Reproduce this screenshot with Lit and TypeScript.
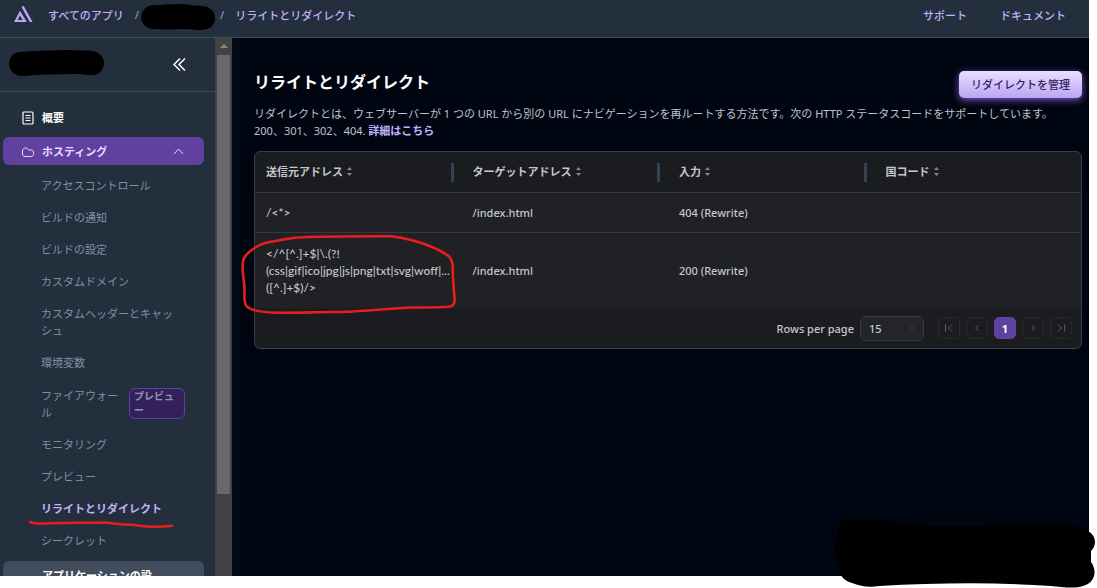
import { LitElement, html, css, svg, nothing } from "lit";
import { customElement } from "lit/decorators.js";
import { classMap } from "lit/directives/class-map.js";

interface NavItem {
  label: string;
  badge?: string;
  active?: boolean;
}

const NAV: NavItem[] = [
  { label: "アクセスコントロール" },
  { label: "ビルドの通知" },
  { label: "ビルドの設定" },
  { label: "カスタムドメイン" },
  { label: "カスタムヘッダーとキャッシュ" },
  { label: "環境変数" },
  { label: "ファイアウォール", badge: "プレビュー" },
  { label: "モニタリング" },
  { label: "プレビュー" },
  { label: "リライトとリダイレクト", active: true },
  { label: "シークレット" },
];

const COLUMNS = ["送信元アドレス", "ターゲットアドレス", "入力", "国コード"];

const ROWS = [
  { source: ["/<*>"], target: "/index.html", type: "404 (Rewrite)", country: "" },
  {
    source: ["</^[^.]+$|\\.(?!", "(css|gif|ico|jpg|js|png|txt|svg|woff|...", "([^.]+$)/>"],
    target: "/index.html",
    type: "200 (Rewrite)",
    country: "",
  },
];

@customElement("top-bar")
class TopBar extends LitElement {
  static styles = css`
    :host {
      display: flex;
      justify-content: space-between;
      box-sizing: border-box;
      height: 38px;
      padding: 0 23px 8px 14px;
      border-bottom: 1px solid #414d5c;
      background: #242f3e;
      color: #8d99a8;
      font-size: 11px;
      font-weight: 500;
    }
    .crumbs,
    .links {
      display: flex;
      align-items: center;
    }
    .logo {
      display: block;
      margin-right: 15px;
    }
    a {
      color: #c3b1fb;
      text-decoration: none;
    }
    .slash {
      margin: 0 11px;
    }
    .hidden-name {
      width: 59px;
    }
    .links {
      gap: 33px;
    }
  `;

  render() {
    return html`
      <nav class="crumbs" aria-label="パンくず">
        <svg class="logo" width="19" height="17" viewBox="0 0 19 17" fill="#b9a6f5">
          <path d="M6 4.800 0 16h10.500L9.200 13.900H3.700L6 9.500 9.900 16h2.900Z" />
          <path d="M7.700 1.600 8.700 0h1L18.600 16H15.900Z" />
        </svg>
        <a href="#apps">すべてのアプリ</a>
        <span class="slash">/</span>
        <span class="hidden-name"></span>
        <span class="slash">/</span>
        <a href="#rewrites">リライトとリダイレクト</a>
      </nav>
      <nav class="links" aria-label="ヘルプ">
        <a href="#support">サポート</a>
        <a href="#docs">ドキュメント</a>
      </nav>
    `;
  }
}

@customElement("side-nav")
class SideNav extends LitElement {
  static styles = css`
    :host {
      display: grid;
      grid-template-columns: minmax(0, 1fr) 17px;
      min-height: 0;
      overflow: hidden;
      background: #242f3e;
      font-size: 11px;
      line-height: 17px;
    }
    .panel {
      min-width: 0;
    }
    .head {
      display: flex;
      justify-content: flex-end;
      align-items: center;
      height: 53px;
      padding-right: 28px;
      border-bottom: 1px solid #414d5c;
    }
    button {
      font: inherit;
      border: 0;
      background: none;
      padding: 0;
      cursor: pointer;
    }
    .collapse {
      display: block;
      color: #fff;
    }
    svg {
      display: block;
    }
    .body {
      padding: 11px 11px 0 3px;
    }
    .row {
      display: grid;
      grid-template-columns: 14px 1fr auto;
      align-items: start;
      gap: 7px;
      box-sizing: border-box;
      width: 100%;
      padding: 6px 20px 5px 18px;
      border-radius: 6px;
      color: #fff;
      font-weight: 700;
      text-align: left;
      text-decoration: none;
    }
    .row svg {
      align-self: center;
    }
    .overview {
      margin: 0 0 6px;
    }
    .hosting {
      background: #61419f;
      color: #e6dcff;
    }
    .settings {
      margin-top: 5px;
      background: #414d5c;
    }
    .settings span {
      grid-column: 2;
      max-width: 115px;
    }
    ul {
      list-style: none;
      margin: 4px 0 0;
      padding: 0 19px 0 38px;
    }
    li a {
      display: flex;
      align-items: center;
      gap: 6px;
      padding: 8px 0 7px;
      color: #8290a0;
      text-decoration: none;
    }
    li span {
      flex: 1;
      max-width: 140px;
    }
    li .active {
      color: #c3b1fb;
      font-weight: 700;
    }
    .badge {
      flex: none;
      box-sizing: border-box;
      width: 56px;
      height: 31px;
      margin: 2px 0;
      padding: 0 4px;
      border: 1px solid #61419f;
      border-radius: 6px;
      background: #34215c;
      color: #8d99a8;
      font-style: normal;
      font-weight: 700;
      font-size: 10px;
      line-height: 14px;
    }
    .track {
      padding: 6px 2px 0;
      background: #424242;
    }
    .arrow {
      margin: 0 auto 7px;
    }
    .thumb {
      height: 439px;
      background: #686868;
    }
  `;

  render() {
    return html`
      <div class="panel">
        <div class="head">
          <button class="collapse" aria-label="メニューを閉じる">
            <svg width="15" height="15" viewBox="0 0 15 15" fill="none" stroke="currentColor" stroke-width="1.500">
              <path d="M8 1.500 2 7.500l6 6M13 1.500 7 7.500l6 6" />
            </svg>
          </button>
        </div>
        <div class="body">
          <a class="row overview" href="#overview">
            <svg width="14" height="14" viewBox="0 0 14 14" fill="none" stroke="currentColor">
              <rect x="2" y="1" width="10" height="12" rx="1" stroke-width="1.200" />
              <path d="M4.500 4.500h5M4.500 7h5M4.500 9.500h5" />
            </svg>
            概要
          </a>
          <button class="row hosting" aria-expanded="true">
            <svg width="14" height="14" viewBox="0 0 14 14" fill="none" stroke="currentColor">
              <path d="M4 11.500C2.400 11.500 1.500 10.300 1.500 9V6C1.500 4.200 2.800 3 4.500 3 6.200 3 7 3.800 7.500 5h2.200C11.500 5 12.700 6.300 12.700 8.300S11.500 11.500 9.700 11.500Z" />
            </svg>
            ホスティング
            <svg width="11" height="7" viewBox="0 0 11 7" fill="none" stroke="currentColor">
              <path d="m1 6 4.500-5L10 6" />
            </svg>
          </button>
          <ul>
            ${NAV.map(
              (item) => html`<li>
                <a href="#nav" class=${classMap({ active: !!item.active })}>
                  <span>${item.label}</span>
                  ${item.badge ? html`<em class="badge">${item.badge}</em>` : nothing}
                </a>
              </li>`
            )}
          </ul>
          <button class="row settings"><span>アプリケーションの設定</span></button>
        </div>
      </div>
      <div class="track">
        <svg class="arrow" width="8" height="4" viewBox="0 0 8 4"><path d="M0 4 4 0l4 4Z" fill="#8a8a8a" /></svg>
        <div class="thumb"></div>
      </div>
    `;
  }
}

const pagerIcon = (d: string) => html`<svg width="10" height="10" viewBox="0 0 10 10" fill="none" stroke="currentColor">
  ${svg`<path d=${d} />`}
</svg>`;

@customElement("redirect-table")
class RedirectTable extends LitElement {
  static styles = css`
    :host {
      display: block;
      overflow: hidden;
      border: 1px solid #3b3d44;
      border-radius: 6px;
      background: #1b1c1f;
      color: #c6c6cd;
      font-size: 11px;
      line-height: 17px;
    }
    table {
      width: 100%;
      table-layout: fixed;
      border-collapse: collapse;
    }
    th {
      height: 40px;
      padding: 0;
      text-align: left;
    }
    .label {
      display: flex;
      justify-content: space-between;
      align-items: flex-start;
      height: 19px;
      margin: 0 8px 0 11px;
      border-right: 3px solid #354256;
    }
    th:last-child .label {
      border-color: transparent;
    }
    button {
      font: inherit;
      color: inherit;
      border: 0;
      background: none;
      padding: 0;
      cursor: pointer;
    }
    .sort {
      display: flex;
      align-items: center;
      gap: 4px;
      font-weight: 700;
    }
    td {
      height: 40px;
      padding: 0 11px;
      border-top: 1px solid #35373d;
      background: #202124;
      font-weight: 500;
      white-space: nowrap;
      box-sizing: border-box;
    }
    td.tall {
      padding: 12px 0 12px 11px;
      height: 75px;
    }
    .source {
      font-family: Lato, "Liberation Sans", sans-serif;
      font-size: 12px;
    }
    .line {
      display: block;
    }
    .footer {
      display: flex;
      justify-content: flex-end;
      align-items: center;
      gap: 6px;
      height: 40px;
      padding-right: 9px;
      font-weight: 500;
    }
    .picker {
      display: grid;
      width: 64px;
      margin-right: 8px;
    }
    select {
      grid-area: 1 / 1;
      appearance: none;
      height: 25px;
      padding: 0 8px;
      border: 1px solid #393b42;
      border-radius: 6px;
      background: #242529;
      color: inherit;
      font: inherit;
    }
    .carets {
      grid-area: 1 / 1;
      justify-self: end;
      align-self: center;
      margin-right: 9px;
      color: #34435a;
      pointer-events: none;
    }
    .page {
      display: grid;
      place-items: center;
      box-sizing: border-box;
      width: 22px;
      height: 22px;
      border: 1px solid #292a2e;
      border-radius: 5px;
      color: #5b5c62;
    }
    .current {
      border-color: #61419f;
      background: #61419f;
      color: #fff;
      font-weight: 700;
    }
  `;

  render() {
    return html`
      <table>
        <thead>
          <tr>
            ${COLUMNS.map(
              (name) => html`<th scope="col">
                <div class="label">
                  <button class="sort">
                    ${name}
                    <svg width="5" height="9" viewBox="0 0 5 9" fill="#85868c"><path d="M0 3 2.500 0 5 3ZM0 6h5L2.500 9Z" /></svg>
                  </button>
                </div>
              </th>`
            )}
          </tr>
        </thead>
        <tbody>
          ${ROWS.map((row) => {
            const tall = row.source.length > 1;
            return html`<tr>
              <td class=${classMap({ source: true, tall })}>
                ${row.source.map((line) => html`<span class="line">${line}</span>`)}
              </td>
              <td class=${classMap({ tall })}>${row.target}</td>
              <td class=${classMap({ tall })}>${row.type}</td>
              <td class=${classMap({ tall })}>${row.country}</td>
            </tr>`;
          })}
        </tbody>
      </table>
      <div class="footer">
        <label for="rows">Rows per page</label>
        <div class="picker">
          <select id="rows">
            <option selected>15</option>
            <option>30</option>
          </select>
          <svg class="carets" width="6" height="8" viewBox="0 0 6 8" fill="none" stroke="currentColor">
            <path d="m.5 3 2.500-2.500L5.500 3M.5 5 3 7.500 5.500 5" />
          </svg>
        </div>
        <button class="page" aria-label="最初">${pagerIcon("M1.500 1.500v7M8 1.500 4.500 5 8 8.500")}</button>
        <button class="page" aria-label="前">${pagerIcon("M6.500 2 3.500 5l3 3")}</button>
        <button class="page current">1</button>
        <button class="page" aria-label="次">${pagerIcon("m3.500 2 3 3-3 3")}</button>
        <button class="page" aria-label="最後">${pagerIcon("M8.500 1.500v7M2 1.500 5.500 5 2 8.500")}</button>
      </div>
    `;
  }
}

@customElement("app-root")
class AppRoot extends LitElement {
  static styles = css`
    :host {
      display: block;
      position: relative;
      box-sizing: border-box;
      height: 100vh;
      padding: 0 8px 12px 0;
      overflow: hidden;
      background: #fff;
      font-family: "Noto Sans", "Noto Sans CJK JP", sans-serif;
    }
    .shell {
      display: grid;
      grid-template: auto minmax(0, 1fr) / 232px minmax(0, 1fr);
      height: 100%;
      background: #000614;
    }
    top-bar {
      grid-column: 1 / -1;
    }
    main {
      padding: 33px 7px 0 22px;
      background: linear-gradient(90deg, #040b18, #000512 12px);
      color: #c0c3c9;
      font-size: 11px;
      line-height: 17px;
    }
    .title {
      display: flex;
      justify-content: space-between;
      align-items: flex-start;
    }
    h1 {
      margin: 0;
      color: #fff;
      font-size: 16px;
      line-height: 22px;
    }
    .manage {
      height: 27px;
      padding: 0 12px;
      border: 0;
      border-radius: 5px;
      background: linear-gradient(#e8dfff, #bba5f3);
      box-shadow: 0 2px 7px #7c55c8;
      color: #33215c;
      font: inherit;
      font-weight: 500;
      cursor: pointer;
    }
    p {
      margin: 7px 0 12px;
    }
    p a {
      color: #c3b1fb;
      font-weight: 700;
      text-decoration: none;
    }
    .ink {
      position: absolute;
      top: 0;
      left: 0;
      pointer-events: none;
    }
  `;

  render() {
    return html`
      <div class="shell">
        <top-bar></top-bar>
        <side-nav></side-nav>
        <main>
          <div class="title">
            <h1>リライトとリダイレクト</h1>
            <button class="manage">リダイレクトを管理</button>
          </div>
          <p>
            リダイレクトとは、ウェブサーバーが 1 つの URL から別の URL にナビゲーションを再ルートする方法です。次の HTTP
            ステータスコードをサポートしています。200、301、302、404. <a href="#more">詳細はこちら</a>
          </p>
          <redirect-table></redirect-table>
        </main>
      </div>
      <svg class="ink" width="1097" height="588" viewBox="0 0 1097 588" aria-hidden="true">
        <path d="M153 5C166 5 177 3 187 4.500c6 1.500 12 1 16 1.500 8 1 12 6 12 12 0 7-5 12-14 12-7 0-12-1.500-20-1-10 1-19 0-28 0-15-1-16-22 0-24Z" />
        <path d="M20 52C36 51 50 50 66 50c9 .2 17 .5 25 .7 8 .8 13 6 13 12.300 0 7-6 13-13 12.300-6-.6-11-1.800-17-1.300-17 .3-34 .500-51 2-18 0-18-23-3-24Z" />
        <path d="M850 519c24 0 45 3 64 6 20 2 39 .5 60 1 34-1 64-1 90-1 18 2 31 6 31 17 0 4-2 7-4 9v11c6 8 5 20-8 24-9 3-21 1-32 0-58-4-115-3-172 0-10 2-19 0-27-3-10-2-14-11-12-19-8-8-7-21-2-29-3-7 3-16 12-16Z" />
        <g fill="none" stroke="#e61e1e" stroke-linecap="round" stroke-linejoin="round">
          <path stroke-width="2.600" d="M243 273c-1-3 0-7-.3-9 0-8 7-13 12-16 6-4 12-6 18-6.500 10-2 20-4 30-4.200 27-1.200 54-1 89-1 22 3 42 10 56 19 4 2 4 6 5 10 0 12 1 24 2 35 0 4-2 6-6 6.500-11 1-23 .500-35 .700-28 1-58 5-80 4.500-20 0-43 1.500-62 .500-11-.5-20-2-25-6-4-5-1.500-14-2.500-22-.4-5-1-8-1.500-13" />
          <path stroke-width="2.600" d="M30 522c4 1.500 8 2 14 1.500 20-1 41-1 62-1 10 1 14 2.500 27 2.200 8 .8 9 2 19 2 8 0 12 0 20-1" />
        </g>
      </svg>
    `;
  }
}
